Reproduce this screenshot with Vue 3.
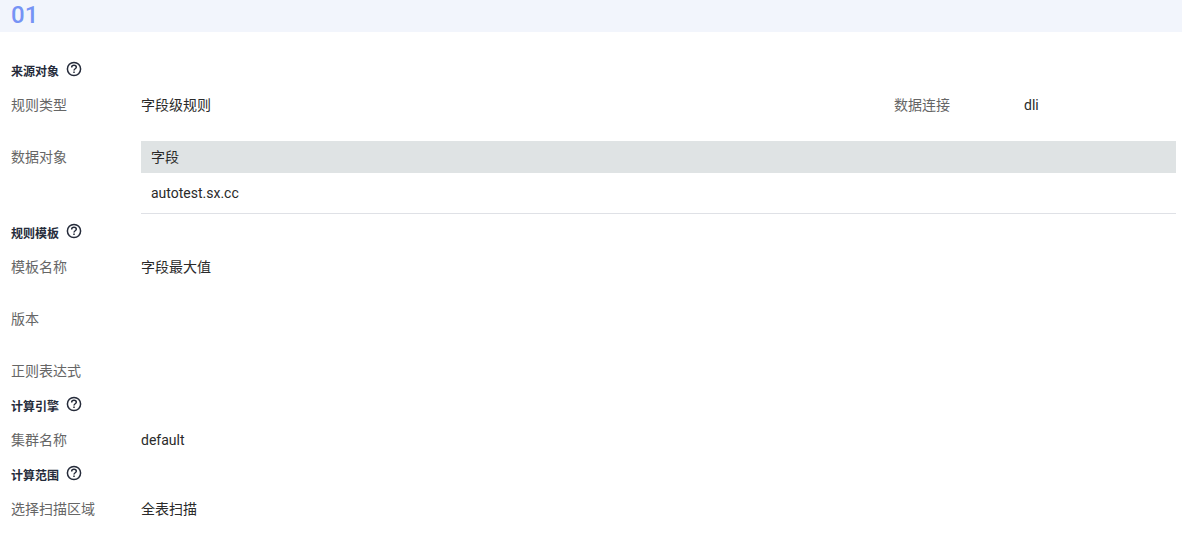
<script setup>
const sections = [
  {
    title: '来源对象',
    rows: [
      [
        { label: '规则类型', value: '字段级规则' },
        { label: '数据连接', value: 'dli' },
      ],
      [{ label: '数据对象', table: { head: '字段', body: ['autotest.sx.cc'] } }],
    ],
  },
  {
    title: '规则模板',
    rows: [
      [{ label: '模板名称', value: '字段最大值' }],
      [{ label: '版本', value: '' }],
      [{ label: '正则表达式', value: '' }],
    ],
  },
  { title: '计算引擎', rows: [[{ label: '集群名称', value: 'default' }]] },
  { title: '计算范围', rows: [[{ label: '选择扫描区域', value: '全表扫描' }]] },
]
</script>

<template>
  <main class="page">
    <header class="banner">
      <h1>01</h1>
    </header>
    <div class="content">
      <section v-for="section in sections" :key="section.title">
        <div class="heading">
          <h2>{{ section.title }}</h2>
          <button type="button" class="help" :aria-label="section.title + '说明'">
            <svg viewBox="0 0 16 16" fill="none" stroke="currentColor" stroke-width="1.5">
              <circle cx="8" cy="8" r="6.6" />
              <path d="M5.7 6.5V6.3C5.7 5 6.6 4.2 8 4.2S10.3 5 10.3 6.2C10.3 7.7 8 7.8 8 9.5" />
              <path d="M8 10.5V12" />
            </svg>
          </button>
        </div>
        <div class="rows">
          <dl
            v-for="(row, i) in section.rows"
            :key="i"
            class="row"
            :class="{ split: row.length > 1 }"
          >
            <div v-for="item in row" :key="item.label" class="item">
              <dt>{{ item.label }}</dt>
              <dd>
                <table v-if="item.table">
                  <thead>
                    <tr><th scope="col">{{ item.table.head }}</th></tr>
                  </thead>
                  <tbody>
                    <tr v-for="name in item.table.body" :key="name"><td>{{ name }}</td></tr>
                  </tbody>
                </table>
                <template v-else>{{ item.value }}</template>
              </dd>
            </div>
          </dl>
        </div>
      </section>
    </div>
  </main>
</template>

<style>
body {
  background: #fff;
}
</style>

<style scoped>
.page {
  font-family: Roboto, "Noto Sans CJK SC", sans-serif;
  font-size: 14px;
  line-height: 32px;
  color: #252b3a;
}
.banner {
  height: 32px;
  padding: 0 11px;
  background: #f2f5fc;
}
h1 {
  margin: 0;
  font-size: 24px;
  font-weight: 500;
  line-height: 30px;
  color: #7693f5;
}
.content {
  padding: 20px 6px 17px 11px;
}
.heading {
  display: flex;
  align-items: flex-end;
  gap: 7px;
  height: 37px;
}
h2 {
  margin: 0;
  font-size: 12px;
  font-weight: 700;
  line-height: 34px;
}
.help {
  width: 16px;
  height: 16px;
  margin: 0 0 12px;
  padding: 0;
  border: 0;
  background: none;
  color: #252b3a;
  cursor: pointer;
}
.help svg {
  display: block;
  width: 16px;
  height: 16px;
}
.rows {
  display: grid;
  gap: 20px;
}
.row {
  display: grid;
  margin: 0;
}
.split {
  grid-template-columns: minmax(0, 1fr) 282px;
}
.item {
  display: grid;
  grid-template-columns: 130px minmax(0, 1fr);
  min-height: 32px;
}
dt {
  color: #666;
}
dd {
  margin: 0;
  color: #2a2a2a;
}
table {
  width: 100%;
  border-collapse: separate;
  border-spacing: 0;
}
th {
  padding: 0 10px;
  background: #dfe3e4;
  font-weight: 400;
  text-align: left;
}
td {
  padding: 0 10px;
  border-bottom: 1px solid #dfe1e6;
  line-height: 40px;
}
</style>
